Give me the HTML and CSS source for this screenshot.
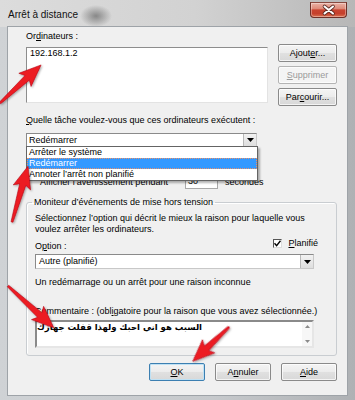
FILE: index.html
```html
<!DOCTYPE html>
<html lang="fr">
<head>
<meta charset="utf-8">
<title>Arrêt à distance</title>
<link rel="stylesheet" href="styles.css">
</head>
<body>
<div class="window">
  <div class="titlebar">
    <span class="title">Arrêt à distance</span>
    <div class="close">
      <svg width="37" height="16" viewBox="0 0 37 16">
        <path d="M14.5 4.5 L23 11.5 M23 4.5 L14.5 11.5" stroke="#5a2a22" stroke-width="3.6" stroke-linecap="round"/>
        <path d="M14.5 4.5 L23 11.5 M23 4.5 L14.5 11.5" stroke="#ffffff" stroke-width="2" stroke-linecap="round"/>
      </svg>
    </div>
  </div>
  <div class="client">
    <div class="lbl">Or<u>d</u>inateurs :</div>
    <div class="computers">
      <div class="listbox">192.168.1.2</div>
      <div class="btncol">
        <div class="btn">Ajout<u>e</u>r...</div>
        <div class="btn disabled"><u>S</u>upprimer</div>
        <div class="btn">Par<u>c</u>ourir...</div>
      </div>
    </div>
    <div class="lbl task-lbl"><u>Q</u>uelle tâche voulez-vous que ces ordinateurs exécutent :</div>
    <div class="combo task-combo">
      <span class="combo-text">Redémarrer</span>
      <span class="drop"><svg width="7" height="4" viewBox="0 0 7 4"><path d="M0 0 H7 L3.5 4 Z" fill="#000"/></svg></span>
      <div class="droplist">
        <div class="item">Arrêter le système</div>
        <div class="item sel">Redémarrer</div>
        <div class="item">Annoter l’arrêt non planifié</div>
      </div>
    </div>
    <div class="warn-row">
      <span class="warn-text">Afficher l’avertissement pendant</span>
      <span class="num">30</span>
      <span>secondes</span>
    </div>
    <fieldset class="group">
      <legend>Moniteur d’événements de mise hors tension</legend>
      <p class="desc">Sélectionnez l’option qui décrit le mieux la raison pour laquelle vous voulez arrêter les ordinateurs.</p>
      <div class="optrow">
        <span class="opt-lbl">O<u>p</u>tion :</span>
        <span class="chk-wrap">
          <span class="chk"><svg width="7" height="7" viewBox="0 0 7 7"><path d="M0.5 3.2 L2.6 5.6 L6.5 0.8" stroke="#000" stroke-width="1.4" fill="none"/></svg></span>
          <span><u>P</u>lanifié</span>
        </span>
      </div>
      <div class="combo opt-combo">
        <span class="combo-text">Autre (planifié)</span>
        <span class="drop"><svg width="7" height="4" viewBox="0 0 7 4"><path d="M0 0 H7 L3.5 4 Z" fill="#000"/></svg></span>
      </div>
      <div class="lbl unknown">Un redémarrage ou un arrêt pour une raison inconnue</div>
      <div class="lbl comment-lbl">Commentaire : (obl<u>i</u>gatoire pour la raison que vous avez sélectionnée.)</div>
      <div class="comment">
        <span class="arabic" dir="rtl">السبب هو اني احبك ولهذا قفلت جهازك</span>
        <span class="scroll">
          <svg width="5" height="3" viewBox="0 0 5 3"><path d="M0 3 H5 L2.5 0 Z" fill="#8a8a8a"/></svg>
          <svg width="5" height="3" viewBox="0 0 5 3"><path d="M0 0 H5 L2.5 3 Z" fill="#8a8a8a"/></svg>
        </span>
      </div>
    </fieldset>
    <div class="buttons">
      <div class="btn dlg default"><u>O</u>K</div>
      <div class="btn dlg">A<u>n</u>nuler</div>
      <div class="btn dlg"><u>A</u>ide</div>
    </div>
  </div>
  <svg class="arrows" width="355" height="400" viewBox="0 0 355 400">
    <defs>
      <filter id="sh" x="-20%" y="-20%" width="140%" height="140%">
        <feDropShadow dx="1" dy="1" stdDeviation="0.8" flood-color="#000" flood-opacity="0.35"/>
      </filter>
    </defs>
    <g fill="#ec1c24" stroke="#b00010" stroke-width="0.5" filter="url(#sh)">
      <polygon transform="translate(0,103) rotate(-42.8)" points="0,-1 37,-3.2 34,-9 56,0 34,9 37,3.2 0,1"/>
      <polygon transform="translate(12,222) rotate(-74)" points="0,-1 39,-3.2 36,-9 58,0 36,9 39,3.2 0,1"/>
      <polygon transform="translate(8,286) rotate(42.4)" points="0,-1 43,-3.2 40,-9 62,0 40,9 43,3.2 0,1"/>
      <polygon transform="translate(229,327) rotate(136.6)" points="0,-1 31,-3.2 28,-9 50,0 28,9 31,3.2 0,1"/>
    </g>
  </svg>
</div>
</body>
</html>
```
FILE: styles.css
```css
* { box-sizing: border-box; }
html, body { margin: 0; padding: 0; }
body {
  width: 355px;
  height: 400px;
  overflow: hidden;
  font-family: "Liberation Sans", Arial, sans-serif;
  font-size: 9px;
  line-height: 11px;
  color: #000;
}
u { text-decoration: underline; text-underline-offset: 1px; }

.window {
  position: relative;
  width: 355px;
  height: 400px;
  display: flex;
  flex-direction: column;
  background: linear-gradient(to right, #cfd2d5, #c6c9cc 60%, #aeb1b4);
}
.titlebar {
  height: 27px;
  flex: none;
  display: flex;
  justify-content: space-between;
  align-items: flex-start;
  padding: 0 8px;
  background:
    radial-gradient(ellipse 16px 11px at 96px 16px, rgba(70,70,70,0.55), rgba(70,70,70,0)),
    linear-gradient(to right, #dcdcdc, #d2d2d2 55%, #b7b7b7);
}
.title {
  font-size: 10px;
  line-height: 12px;
  margin-top: 9px;
  color: #111;
}
.close {
  margin-top: 2px;
  width: 37px;
  height: 16px;
  border: 1px solid #6e3028;
  border-top-color: #8a4a40;
  border-radius: 0 0 4px 4px;
  background: linear-gradient(#eab2a6 0%, #de8b7a 40%, #c9432f 50%, #c5402c 75%, #d9704f 100%);
  box-shadow: inset 0 0 0 1px rgba(255,255,255,0.35);
  overflow: hidden;
}
.close svg { display: block; margin: -1px 0 0 -1px; }

.client {
  margin: 0 8px;
  height: 368px;
  flex: none;
  background: #f0f0f0;
  padding: 4px 10px 0 18px;
  box-shadow: 0 0 0 1px #9ea3a8;
}
.lbl { height: 11px; white-space: nowrap; }

.computers {
  display: flex;
  gap: 10px;
  margin-top: 2px;
  height: 62px;
}
.listbox {
  width: 242px;
  height: 56px;
  margin-top: 3px;
  background: #fff;
  border: 1px solid;
  border-color: #8d8d8d #e3e3e3 #e3e3e3 #8d8d8d;
  padding: 0 3px;
}
.btncol {
  width: 59px;
  display: flex;
  flex-direction: column;
  gap: 4px;
}
.btn {
  height: 18px;
  display: flex;
  align-items: center;
  justify-content: center;
  border: 1px solid #8a8a8a;
  border-radius: 2px;
  background: linear-gradient(#f4f4f4, #ececec 48%, #e0e0e0 52%, #d8d8d8);
  box-shadow: inset 0 0 0 1px rgba(255,255,255,0.7);
  white-space: nowrap;
}
.btn.disabled {
  color: #9a9a9a;
  border-color: #b4b4b4;
  background: #f4f4f4;
}

.task-lbl { margin-top: 9px; }
.combo {
  position: relative;
  display: flex;
  justify-content: space-between;
  align-items: center;
  background: #fff;
  border: 1px solid;
  border-color: #8a8a8a #c8c8c8 #c8c8c8 #8a8a8a;
}
.task-combo { width: 231px; height: 14px; margin-top: 7px; }
.combo-text { padding-left: 2px; }
.drop {
  width: 13px;
  height: 100%;
  display: flex;
  align-items: center;
  justify-content: center;
  background: linear-gradient(#f2f2f2, #dedede);
  border-left: 1px solid #b9b9b9;
}
.droplist {
  position: absolute;
  top: 100%;
  left: -1px;
  width: 232px;
  border: 1px solid #646464;
  background: #fff;
  box-shadow: 2px 2px 2px rgba(0,0,0,0.3);
  z-index: 2;
}
.item { height: 11px; padding-left: 2px; white-space: nowrap; }
.item.sel {
  background: #3399ff;
  color: #fff;
  outline: 1px dotted #e9916a;
  outline-offset: -1px;
}

.warn-row {
  display: flex;
  align-items: center;
  height: 14px;
  margin-top: 28px;
  padding-left: 14px;
}
.warn-text { width: 145px; white-space: nowrap; }
.num {
  width: 33px;
  height: 14px;
  background: #fff;
  border: 1px solid #a9a9a9;
  padding-left: 2px;
  margin-right: 7px;
}

.group {
  margin: 8px 0 0;
  padding: 5px 22px 7px 8px;
  border: 1px solid #c9cdd1;
  border-radius: 3px;
  box-shadow: inset 1px 1px 0 #fff;
  min-width: 0;
}
.group legend {
  padding: 0 2px;
  margin-left: -3px;
  line-height: 11px;
  white-space: nowrap;
}
.desc { margin: 0; line-height: 11px; }
.optrow {
  display: flex;
  justify-content: space-between;
  height: 14px;
  margin-top: 3px;
}
.opt-lbl { align-self: flex-end; }
.chk-wrap {
  display: flex;
  align-items: center;
  gap: 6px;
  margin-right: -4px;
  height: 11px;
}
.chk {
  width: 9px;
  height: 9px;
  background: #fff;
  border: 1px solid;
  border-color: #555 #ddd #ddd #555;
  display: flex;
  align-items: center;
  justify-content: center;
}
.chk svg { display: block; }
.opt-combo { height: 15px; margin-top: 2px; }
.opt-combo .combo-text { padding-left: 3px; }
.unknown { margin-top: 8px; }
.comment-lbl { margin-top: 18px; }
.comment {
  height: 28px;
  margin-top: 3px;
  background: #fff;
  border: 2px solid;
  border-color: #8a8a8a #e6e6e6 #e6e6e6 #8a8a8a;
  display: flex;
  justify-content: space-between;
}
.arabic {
  font-family: "DejaVu Sans", sans-serif;
  font-size: 8.5px;
  font-weight: bold;
  line-height: 11px;
  white-space: nowrap;
}
.scroll {
  width: 10px;
  display: flex;
  flex-direction: column;
  justify-content: space-between;
  align-items: center;
  padding: 3px 0;
  background: #f7f7f7;
}
.scroll svg { display: block; }

.buttons {
  display: flex;
  justify-content: flex-end;
  gap: 10px;
  margin-top: 7px;
}
.btn.dlg { width: 56px; height: 18px; }
.btn.default {
  border-color: #3c7fb1;
  box-shadow: inset 0 0 0 1px #bfe1f4;
}

.arrows {
  position: absolute;
  left: 0;
  top: 0;
  pointer-events: none;
  z-index: 5;
}
```
